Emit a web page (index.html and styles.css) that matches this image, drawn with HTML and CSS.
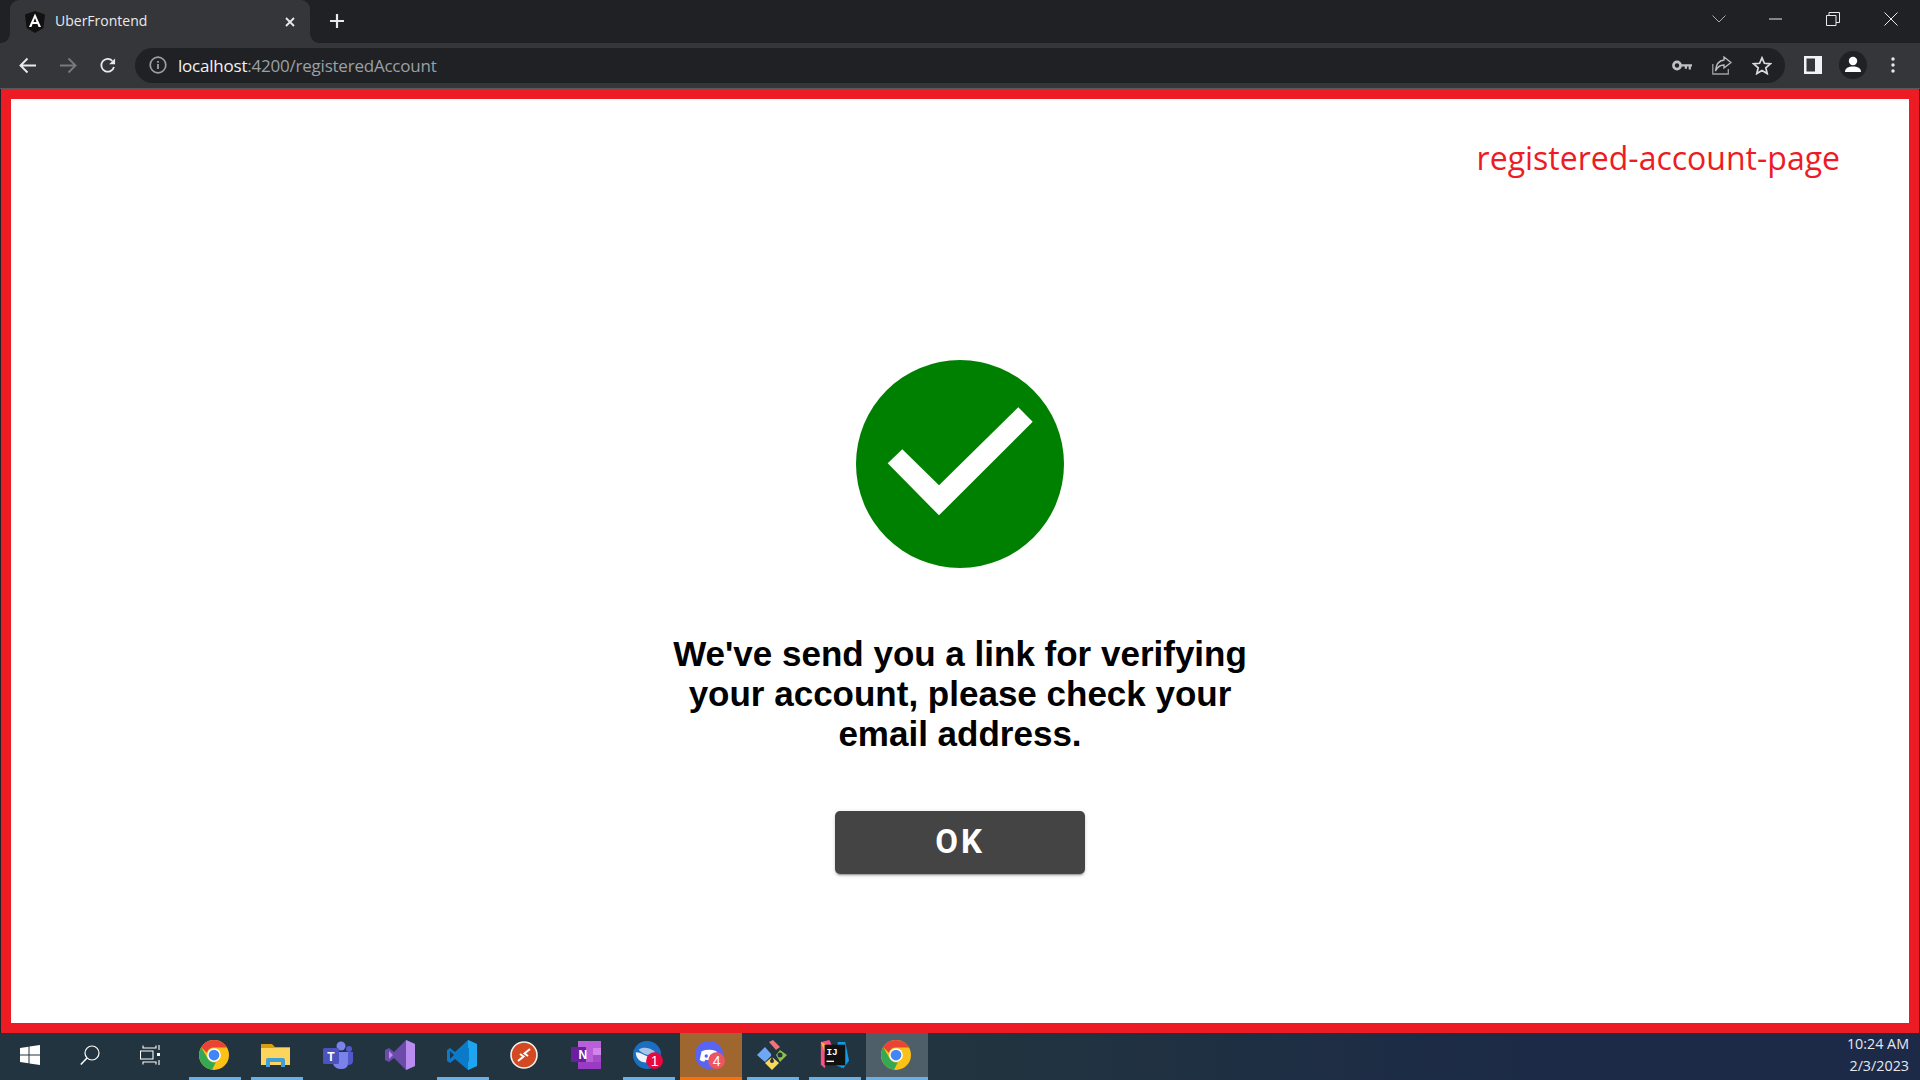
FILE: index.html
```html
<!DOCTYPE html>
<html lang="en">
<head>
<meta charset="utf-8">
<title>UberFrontend</title>
<link rel="stylesheet" href="styles.css">
</head>
<body>
<svg class="defs" width="0" height="0" aria-hidden="true">
  <symbol id="chrome" viewBox="0 0 48 48">
    <circle cx="24" cy="24" r="24" fill="#fbc116"/>
    <path d="M24 0A24 24 0 0 1 44.8 12H24a12 12 0 0 0-11.4 8.2L3.6 11.7A24 24 0 0 1 24 0z" fill="#ea4335"/>
    <path d="M3.6 11.7 14.2 30A12 12 0 0 0 27 35.6L20.6 47.8A24 24 0 0 1 3.6 11.7z" fill="#34a853"/>
    <circle cx="24" cy="24" r="11" fill="#fff"/>
    <circle cx="24" cy="24" r="8.6" fill="#4285f4"/>
  </symbol>
</svg>
<header class="tabstrip">
  <div class="tab">
    <svg class="tab-icon" viewBox="0 0 20 22"><path d="M10 0 0 3.5 1.6 17 10 22l8.4-5L20 3.5z" fill="#111"/><path d="M10 2.5 4 16h2.4l1.2-3h4.8l1.2 3H16zM8.5 11 10 7l1.5 4z" fill="#fff"/></svg>
    <span class="tab-title">UberFrontend</span>
    <svg class="tab-close" viewBox="0 0 10 10"><path d="M1 1l8 8M9 1 1 9" stroke="#e8eaed" stroke-width="1.8"/></svg>
  </div>
  <svg class="newtab" viewBox="0 0 14 14"><path d="M7 0v14M0 7h14" stroke="#e8eaed" stroke-width="2.2"/></svg>
  <div class="window-controls">
    <svg class="wc wc-chevron" viewBox="0 0 14 8"><path d="M.5.5 7 7 13.500.5" fill="none" stroke="#a9abae"/></svg>
    <svg class="wc wc-min" viewBox="0 0 14 14"><path d="M0 7h13" stroke="#e8eaed" stroke-width="1"/></svg>
    <svg class="wc wc-restore" viewBox="0 0 14 14"><path d="M.5 3.500h9.500v10H.5zM3 3.500V.5h10.500v10H10" fill="none" stroke="#e8eaed"/></svg>
    <svg class="wc wc-close" viewBox="0 0 14 14"><path d="M.5.5l13 13M13.500.5l-13 13" stroke="#e8eaed"/></svg>
  </div>
</header>
<nav class="toolbar">
  <div class="navbtn"><svg viewBox="0 0 18 16"><path d="M17 8H2M8.500 1 1.500 8l7 7" fill="none" stroke="#e8eaed" stroke-width="1.900"/></svg></div>
  <div class="navbtn"><svg viewBox="0 0 18 16"><path d="M1 8h15M9.500 1l7 7-7 7" fill="none" stroke="#77797c" stroke-width="1.900"/></svg></div>
  <div class="navbtn"><svg viewBox="0 0 18 18"><path d="M15.300 10.500A6.800 6.800 0 1 1 13.600 4" fill="none" stroke="#e8eaed" stroke-width="1.900"/><path d="M16.500 1.500v6.300h-6.300z" fill="#e8eaed"/></svg></div>
  <div class="omnibox">
    <svg class="info" viewBox="0 0 18 18"><circle cx="9" cy="9" r="7.800" fill="none" stroke="#9aa0a6" stroke-width="1.700"/><path d="M9 8v5M9 5v1.800" stroke="#9aa0a6" stroke-width="1.800"/></svg>
    <span class="url"><span class="host">localhost</span>:4200/registeredAccount</span>
    <div class="omni-actions">
      <svg viewBox="0 0 18 10"><circle cx="4.500" cy="5" r="3.200" fill="none" stroke="#bdc1c6" stroke-width="2.400"/><path d="M8 3.800h10V6h-1v2.500h-2V6h-1.500v2H11.500V6H8z" fill="#bdc1c6"/></svg>
      <svg viewBox="0 0 20 19"><path d="M.8 8v10h15.500v-5" fill="none" stroke="#9aa0a6" stroke-width="1.300"/><path d="M12 1l7 5.500-7 5.500V9C8 9 5.500 10.500 3.500 15 4 9 7 4.500 12 4z" fill="none" stroke="#bdc1c6" stroke-width="1.300"/></svg>
      <svg viewBox="0 0 20 19"><path d="M10 1.800l2.400 5.500 6 .5-4.600 4 1.400 5.800-5.200-3-5.200 3 1.400-5.800-4.600-4 6-.5z" fill="none" stroke="#dadce0" stroke-width="1.700"/></svg>
    </div>
  </div>
  <div class="tool tool-panel"><svg viewBox="0 0 18 18"><rect width="18" height="18" fill="#f1f3f4"/><rect x="2.500" y="2.500" width="8.500" height="13" fill="#35363a"/></svg></div>
  <div class="tool"><svg class="avatar" viewBox="0 0 28 28"><circle cx="14" cy="14" r="14" fill="#202124"/><circle cx="14" cy="10" r="4.200" fill="#fff"/><path d="M6 21c0-4 3.500-5.500 8-5.500s8 1.500 8 5.500z" fill="#fff"/></svg></div>
  <div class="tool"><svg class="dots" viewBox="0 0 4 16"><circle cx="2" cy="2" r="1.700" fill="#e8eaed"/><circle cx="2" cy="8" r="1.700" fill="#e8eaed"/><circle cx="2" cy="14" r="1.700" fill="#e8eaed"/></svg></div>
</nav>
<main class="frame">
  <p class="page-label">registered-account-page</p>
  <section class="message">
    <svg class="check" viewBox="0 0 208 208"><circle cx="104" cy="104" r="104" fill="#008000"/><path d="M162.300 47.300 176.700 61.700 83 155.300 31.700 103.300 46.300 89.300 83 125.300z" fill="#fff"/></svg>
    <h1 class="headline">We've send you a link for verifying your account, please check your email address.</h1>
    <button class="ok" type="button">OK</button>
  </section>
</main>
<footer class="taskbar">
  <div class="sys"><svg class="win" viewBox="0 0 20 20"><path d="M0 3l8.500-1.200v7.700H0zM9.500 1.600 20 0v9.500H9.500zM0 10.500h8.500v7.700L0 17zM9.500 10.500H20V20L9.500 18.400z" fill="#fff"/></svg></div>
  <div class="sys"><svg class="search" viewBox="0 0 20 20"><circle cx="12" cy="8" r="7" fill="none" stroke="#fff" stroke-width="1.200"/><path d="M7 13 .8 19.500" stroke="#fff" stroke-width="1.500"/></svg></div>
  <div class="sys sys-last"><svg class="taskview" viewBox="0 0 20 20"><path d="M3 .5V3h13V.5M3 19.500V17h13v2.500M.5 6h12.500v8H.5zM19 0v5M19 15v5" fill="none" stroke="#fff" stroke-width="1.100"/><rect x="17" y="8" width="3" height="3" fill="#fff"/></svg></div>
  <div class="app open"><svg class="ico"><use href="#chrome"/></svg></div>
  <div class="app open"><svg class="ico" viewBox="0 0 30 24"><path d="M0 1h11l3 3h15v18H0z" fill="#d99e0b"/><path d="M0 5h29v17H0z" fill="#fdd45c"/><path d="M5 24v-7q0-2 2-2h15q2 0 2 2v7h-4v-5H9v5z" fill="#3f9fdc"/></svg></div>
  <div class="app"><svg class="ico" viewBox="0 0 30 28"><circle cx="18" cy="5" r="4.500" fill="#7b83eb"/><circle cx="26" cy="8" r="3" fill="#5059c9"/><path d="M22 11h8v9q0 4-5 4h-3z" fill="#5059c9"/><path d="M10 11h15v11q0 6-7 6-6 0-8-5z" fill="#7b83eb"/><rect y="7" width="16" height="16" rx="1.500" fill="#4b53bc"/><text x="8" y="20" class="teams-t">T</text></svg></div>
  <div class="app"><svg class="ico" viewBox="0 0 30 30"><path d="M21 0 30 4v22l-9 4L9 18l-5 4-4-2V10l4-2 5 4z" fill="#6d4bab"/><path d="M21 0 30 4v22l-9 4z" fill="#b98cf0"/><path d="M21 9v12l-7-6z" fill="#6d4bab"/><path d="M4 11v8l4-4z" fill="#b98cf0"/></svg></div>
  <div class="app open"><svg class="ico" viewBox="0 0 30 30"><path d="M21 0 30 4v22l-9 4-13-11-5 4-3-2V10l3-2 5 4z" fill="#0a7ac9"/><path d="M21 0 30 4v22l-9 4z" fill="#1fa5ef"/><path d="M22 8v14L12 15z" fill="#0a7ac9"/><path d="M3 11v8l4-4z" fill="#22344a"/></svg></div>
  <div class="app"><svg class="ico ico-rdp" viewBox="0 0 28 28"><circle cx="14" cy="14" r="13" fill="#d34a22" stroke="#f4f1ee" stroke-width="1.600"/><path d="M20 8l-5.500 4.500 3.500 2.500M8 20l5.500-4.500-3.500-2.500" fill="none" stroke="#fff" stroke-width="2"/></svg></div>
  <div class="app"><svg class="ico" viewBox="0 0 30 30"><rect x="7" y="1" width="23" height="28" fill="#ba5fd9"/><rect x="22" y="8" width="8" height="7" fill="#d085e8"/><rect x="22" y="15" width="8" height="7" fill="#a34cc6"/><rect x="7" y="22" width="23" height="7" fill="#9a3bc4"/><rect y="7" width="15" height="15" fill="#6b1f9c"/><text x="7.500" y="19" class="note-t">N</text></svg></div>
  <div class="app open"><svg class="ico" viewBox="0 0 32 30"><circle cx="15" cy="15" r="15" fill="#1b6fc2"/><path d="M3 12c6 0 9 4 15 5l-4 6C7 23 3 18 3 12z" fill="#f0f3f8"/><path d="M6 9c5-3 12-2 18 3l-8 3C12 14 8 12 6 9z" fill="#aac4e8"/><circle cx="23" cy="21" r="9" fill="#e8083e"/><text x="23" y="27" class="badge-t">1</text></svg></div>
  <div class="app attention"><svg class="ico" viewBox="0 0 32 30"><circle cx="15" cy="15" r="15" fill="#5865f2"/><path d="M7 11q8-3 16 0l2 9q-2 2-5 2l-1-2q-4 1-8 0l-1 2q-3 0-5-2z" fill="#fff"/><circle cx="12" cy="16" r="1.800" fill="#5865f2"/><circle cx="18" cy="16" r="1.800" fill="#5865f2"/><circle cx="23" cy="21" r="9" fill="#ed5564"/><text x="23" y="27" class="badge-t">4</text></svg></div>
  <div class="app open"><svg class="ico" viewBox="0 0 30 30"><path d="M0 15 8 7l7 8-7 7z" fill="#6ea8f5"/><path d="M12 2l4-2 7 7-4 3z" fill="#f0727a"/><path d="M19 15l4-5 7 5-7 7z" fill="#8bc34a"/><path d="M8 23l7-6 7 6-7 7z" fill="#fbd75b"/><circle cx="23" cy="15" r="2.500" fill="#26323e"/><circle cx="15" cy="21" r="2" fill="#26323e"/><path d="M15 10v10" stroke="#26323e" stroke-width="1.600"/></svg></div>
  <div class="app open"><svg class="ico" viewBox="0 0 32 32"><path d="M2 2l9-2 3 6-8 24-4-4z" fill="#fc4f86"/><path d="M2 2l6 3v14z" fill="#fcb13d"/><path d="M20 2h8l4 20-6 8-8-3z" fill="#0d9be8"/><rect x="6" y="5" width="22" height="22" fill="#111"/><text x="8" y="16" class="ij-t">IJ</text><rect x="8" y="22" width="8" height="1.500" fill="#fff"/></svg></div>
  <div class="app open current"><svg class="ico"><use href="#chrome"/></svg></div>
  <div class="clock"><span>10:24 AM</span><span>2/3/2023</span></div>
</footer>
</body>
</html>
```
FILE: styles.css
```css
* { box-sizing: border-box; }
html, body { margin: 0; height: 100%; }
body {
  width: 1920px;
  height: 1080px;
  overflow: hidden;
  display: flex;
  flex-direction: column;
  background: #202124;
  font-family: "Open Sans", "Liberation Sans", sans-serif;
}
.defs { position: absolute; }

/* tab strip */
.tabstrip {
  height: 43px;
  flex: none;
  display: flex;
  align-items: center;
  padding-left: 10px;
  background: #202124;
}
.tab {
  position: relative;
  width: 300px;
  height: 43px;
  display: flex;
  align-items: center;
  padding: 0 15px 0 15px;
  background: #35363a;
  border-radius: 9px 9px 0 0;
  color: #e8eaed;
}
.tab::before, .tab::after {
  content: "";
  position: absolute;
  bottom: 0;
  width: 9px;
  height: 9px;
}
.tab::before { left: -9px; background: radial-gradient(circle at 0 0, #202124 8.500px, #35363a 9px); }
.tab::after { right: -9px; background: radial-gradient(circle at 100% 0, #202124 8.500px, #35363a 9px); }
.tab-icon { width: 20px; height: 22px; flex: none; }
.tab-title { margin: 0 0 2px 10px; font-size: 14px; flex: 1; }
.tab-close { width: 10px; height: 10px; flex: none; }
.newtab { width: 14px; height: 14px; margin: 0 0 1px 20px; flex: none; }
.window-controls {
  margin-left: auto;
  display: flex;
  align-items: center;
  height: 100%;
  padding-bottom: 6px;
  padding-right: 22px;
}
.wc { width: 14px; height: 14px; flex: none; margin-left: 44px; }
.wc-chevron { height: 8px; margin-left: 0; }
.wc-min { margin-left: 43px; }
.wc-restore { margin-left: 43px; }

/* toolbar */
.toolbar {
  height: 46px;
  flex: none;
  display: flex;
  align-items: center;
  padding: 0 7px 1px 8px;
  background: #35363a;
  border-bottom: 1px solid #55575a;
}
.navbtn { width: 40px; height: 32px; display: flex; align-items: center; justify-content: center; flex: none; }
.navbtn svg { width: 18px; height: 17px; }
.omnibox {
  width: 1650px;
  height: 35px;
  margin-left: 7px;
  margin-right: 8px;
  flex: none;
  display: flex;
  align-items: center;
  padding: 0 13px 0 14px;
  background: #202124;
  border-radius: 18px;
  color: #9aa0a6;
}
.info { width: 18px; height: 18px; flex: none; }
.url { margin-left: 11px; font-size: 17px; letter-spacing: -.22px; }
.host { color: #f1f3f4; }
.omni-actions { margin-left: auto; display: flex; align-items: center; gap: 20px; }
.omni-actions svg { width: 20px; height: 19px; }
.tool { width: 40px; height: 32px; flex: none; display: flex; align-items: center; justify-content: center; }
.tool-panel svg { width: 18px; height: 18px; }
.avatar { width: 28px; height: 28px; }
.dots { width: 4px; height: 16px; }

/* page */
.frame {
  height: 944px;
  flex: none;
  margin-left: 1px;
  margin-right: 1px;
  border: 10px solid #ed1c24;
  background: #fff;
}
.page-label {
  margin: 37px 69px 0 0;
  text-align: right;
  font-size: 32px;
  line-height: 44px;
  color: #ed1c24;
}
.message { display: flex; flex-direction: column; align-items: center; margin-top: 180px; }
.check { width: 208px; height: 208px; display: block; }
.headline {
  width: 600px;
  margin: 66px 0 0;
  text-align: center;
  font-family: "Liberation Sans", Arial, sans-serif;
  font-size: 35px;
  line-height: 40px;
  font-weight: 700;
  color: #000;
}
.ok {
  width: 250px;
  height: 63px;
  margin-top: 57px;
  padding: 0 0 2px;
  border: 0;
  border-radius: 5px;
  background: #444;
  box-shadow: 0 3px 1px -2px rgba(0,0,0,.2), 0 2px 2px rgba(0,0,0,.14), 0 1px 5px rgba(0,0,0,.12);
  color: #fff;
  font-family: Roboto, "Liberation Sans", sans-serif;
  font-size: 33px;
  font-weight: 700;
  letter-spacing: 3px;
}

/* taskbar */
.taskbar {
  height: 47px;
  flex: 1;
  display: flex;
  align-items: stretch;
  background: linear-gradient(90deg, #22343f 0%, #22343f 50%, #1c2a47 80%, #1c2a47 100%);
}
.sys { width: 60px; padding-bottom: 3px; display: flex; align-items: center; justify-content: center; flex: none; }
.sys-last { margin-right: 4px; }
.win { width: 20px; height: 20px; }
.search { width: 20px; height: 20px; }
.taskview { width: 20px; height: 20px; }
.app { width: 62px; padding: 0 2px 3px 0; display: flex; align-items: center; justify-content: center; flex: none; position: relative; }
.ico { width: 30px; height: 30px; }
.ico-rdp { width: 28px; height: 28px; }
.open::after {
  content: "";
  position: absolute;
  left: 5px;
  right: 5px;
  bottom: 0;
  height: 3px;
  background: #6ab0e5;
}
.current { background: #4f5f69; }
.current::after { left: 0; right: 0; }
.attention { background: #a0662f; }
.attention::after {
  content: "";
  position: absolute;
  left: 0;
  right: 0;
  bottom: 0;
  height: 3px;
  background: #f7700a;
}
.teams-t, .note-t, .ij-t, .badge-t {
  fill: #fff;
  font-family: "Liberation Sans", Arial, sans-serif;
  font-weight: 700;
}
.teams-t { font-size: 12px; text-anchor: middle; }
.note-t { font-size: 12px; }
.ij-t { font-size: 10px; font-family: "Liberation Mono", monospace; }
.badge-t { font-size: 15px; font-weight: 400; text-anchor: middle; }
.clock {
  margin-left: auto;
  padding: 0 11px 3px 0;
  display: flex;
  flex-direction: column;
  justify-content: center;
  align-items: flex-end;
  font-size: 14.300px;
  line-height: 22px;
  color: #e6e8ee;
}
```
